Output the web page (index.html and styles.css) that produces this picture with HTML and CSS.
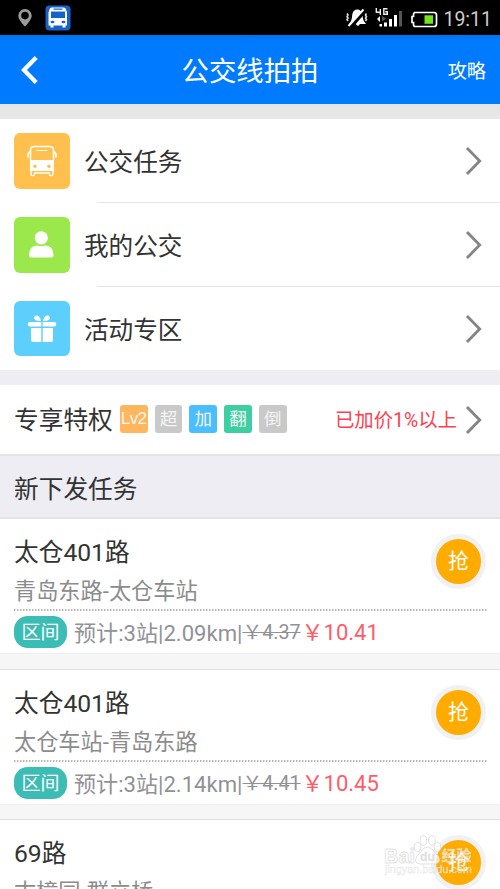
FILE: index.html
```html
<!DOCTYPE html>
<html lang="zh-CN">
<head>
<meta charset="utf-8">
<title>公交线拍拍</title>
<link rel="stylesheet" href="styles.css">
</head>
<body>
<div class="screen">
  <div class="status">
    <svg class="pin" width="14" height="18" viewBox="0 0 14 18"><path d="M7 0a6.700 6.700 0 0 0-6.700 6.700C.3 11 7 17.500 7 17.500s6.700-6.500 6.700-10.800A6.700 6.700 0 0 0 7 0zm0 2.800a3.800 3.800 0 1 1 0 7.600 3.800 3.800 0 0 1 0-7.600z" fill="#9b9b9b" fill-rule="evenodd"/></svg>
    <svg class="app" width="26" height="26" viewBox="0 0 26 26"><rect x=".5" y=".5" width="25" height="25" rx="4" fill="#1762c9"/><path d="M7 2.500h11q3 0 3.300 3l.7 2v13h-1.500v2h-3v-2h-9v2h-3v-2H3.500v-13l.7-2q.3-3 2.800-3z" fill="#fff"/><path d="M6 6.500h14v6.500H6zM8.500 3.600h9v1.200h-9z" fill="#1762c9"/><ellipse cx="7.500" cy="17" rx="2" ry="1.300" fill="#1762c9"/><ellipse cx="18.500" cy="17" rx="2" ry="1.300" fill="#1762c9"/></svg>
    <svg class="mute" width="22" height="20" viewBox="0 0 22 20"><path d="M3 16Q6 13 6.200 7q.8-5.500 5-5.500T16.500 7q.2 6 3.500 9h-6l-2 2-2.500-2z" fill="#fff"/><path d="M4 19.500 19 2.500" stroke="#000" stroke-width="4"/><path d="M2.500 18 17.500 1.500" stroke="#fff" stroke-width="2"/><path d="M1 5.500 2 7 1 8.500 2 10 1 11.500 2 13M20.500 5.500l-1 1.500 1 1.500-1 1.500 1 1.500-1 1.500" fill="none" stroke="#ddd" stroke-width="1.600"/></svg>
    <svg class="signal" width="28" height="20" viewBox="0 0 28 20"><path d="M1.300 0v4.200H6M5.300 1v6M12.500.8H8.800v5.400h3.500V3.700h-2" fill="none" stroke="#eee" stroke-width="1.400"/><path d="m2 11 3-3v6zM4.500 16h2.500v2.500H4.500zM9 14.500h3v4H9zM14 11h3v7.500h-3zM19 7h3v11.500h-3z" fill="#fff"/><path d="M24 3h3v15.500h-3zM7 8l4 2.500-4 3z" fill="#555"/></svg>
    <svg class="battery" width="28" height="17" viewBox="0 0 28 17"><path d="M5 1.500h19q2.500 0 2.500 2.500v9q0 2.500-2.500 2.500H5Q3.500 15.500 3.500 13v-1.500H2V5.500h1.500V4q0-2.500 1.500-2.500z" fill="none" stroke="#fff" stroke-width="1.700"/><path d="M14.500 4.300H23v8.500h-8.500z" fill="#72e51c"/></svg>
    <span class="clock">19:11</span>
  </div>
  <header class="header">
    <svg class="back" width="17" height="28" viewBox="0 0 17 28"><path d="M15.200 1.500 3 14l12.200 12.500" fill="none" stroke="#fff" stroke-width="4.300"/></svg>
    <h1 class="title">公交线拍拍</h1>
    <span class="guide">攻略</span>
  </header>
  <nav class="menu">
    <div class="item">
      <span class="tile orange"><svg width="56" height="56" viewBox="0 0 56 56"><path d="M16.500 27V17q0-3.500 4-3.500h15q4 0 4 3.500v10" fill="none" stroke="#fff" stroke-width="1.500"/><path d="M22.500 17.500h11" stroke="#fff" stroke-width="1.200"/><path d="M16.500 18.500q-3 1-2.500 6M39.500 18.500q3 1 2.500 6" fill="none" stroke="#fff" stroke-width="1.800"/><path d="M16 27h24v11H16z" fill="#fff"/><circle cx="21" cy="33.300" r="1.700" fill="#ffc04e"/><circle cx="35" cy="33.300" r="1.700" fill="#ffc04e"/><path d="M17 38v3.500q0 1.200 1.700 1.200t1.800-1.200V40h15v1.500q0 1.200 1.700 1.200t1.800-1.200V38" fill="none" stroke="#fff" stroke-width="1.300"/></svg></span>
      <div class="body"><span class="name">公交任务</span><svg class="arrow" width="18" height="30" viewBox="0 0 18 30"><path d="m2 2 12.700 13L2 28" fill="none" stroke="#858585" stroke-width="2.800"/></svg></div>
    </div>
    <div class="item">
      <span class="tile green"><svg width="56" height="56" viewBox="0 0 56 56"><circle cx="27.300" cy="20.800" r="6.600" fill="#fff"/><path d="M15 38.500q0-9.500 8-10 4 1.500 8.500 0 8 .5 8 10 0 2-2 2H17q-2 0-2-2z" fill="#fff"/></svg></span>
      <div class="body"><span class="name">我的公交</span><svg class="arrow" width="18" height="30" viewBox="0 0 18 30"><path d="m2 2 12.700 13L2 28" fill="none" stroke="#858585" stroke-width="2.800"/></svg></div>
    </div>
    <div class="item">
      <span class="tile blue"><svg width="56" height="56" viewBox="0 0 56 56"><path d="M16 21h11.300v4.500H16a2 2 0 0 1 0-4.500zM28.700 21H40a2 2 0 0 1 0 4.500H28.700zM17 27h10.300v14H19q-2 0-2-2zM28.700 27H39v12q0 2-2 2h-8.300z" fill="#fff"/><path d="M27 20q-6 0-7-2.500 0-3 3-3Q26 15 27 20zM29 20q6 0 7-2.500 0-3-3-3Q30 15 29 20z" fill="#fff"/></svg></span>
      <div class="body"><span class="name">活动专区</span><svg class="arrow" width="18" height="30" viewBox="0 0 18 30"><path d="m2 2 12.700 13L2 28" fill="none" stroke="#858585" stroke-width="2.800"/></svg></div>
    </div>
  </nav>
  <section class="privilege">
    <span class="label">专享特权</span>
    <div class="tags"><span class="tag lv">Lv2</span><span class="tag">超</span><span class="tag sky">加</span><span class="tag mint">翻</span><span class="tag">倒</span></div>
    <span class="raise">已加价1%以上</span>
    <svg class="arrow" width="18" height="30" viewBox="0 0 18 30"><path d="m2 2 12.700 13L2 28" fill="none" stroke="#858585" stroke-width="2.800"/></svg>
  </section>
  <h2 class="section">新下发任务</h2>
  <article class="card">
    <div class="top"><div><div class="route">太仓401路</div><div class="stops">青岛东路-太仓车站</div></div><span class="grab">抢</span></div>
    <svg class="dots" width="473" height="2"><path d="M0 1h473" stroke="#999" stroke-width="1.400" stroke-dasharray="1.400 1.600"/></svg>
    <div class="meta"><span class="badge">区间</span><span class="info">预计:3站|2.09km|</span><s class="old">￥4.37</s><span class="price">￥10.41</span></div>
  </article>
  <article class="card">
    <div class="top"><div><div class="route">太仓401路</div><div class="stops">太仓车站-青岛东路</div></div><span class="grab">抢</span></div>
    <svg class="dots" width="473" height="2"><path d="M0 1h473" stroke="#999" stroke-width="1.400" stroke-dasharray="1.400 1.600"/></svg>
    <div class="meta"><span class="badge">区间</span><span class="info">预计:3站|2.14km|</span><s class="old">￥4.41</s><span class="price">￥10.45</span></div>
  </article>
  <article class="card">
    <div class="top"><div><div class="route">69路</div><div class="stops">古樟园-群立桥</div></div><span class="grab">抢</span></div>
  </article>
  <div class="watermark">
    <svg width="94" height="48" viewBox="0 0 94 48">
      <g fill="#fff" fill-opacity=".7" stroke="#d8d8d8" stroke-opacity=".8">
        <ellipse cx="34.500" cy="14" rx="3.300" ry="4.500"/><ellipse cx="40.500" cy="7.500" rx="3.300" ry="4.800"/><ellipse cx="49" cy="7.500" rx="3.300" ry="4.800"/><ellipse cx="54.500" cy="14" rx="3.300" ry="4.500"/>
        <path d="M44.500 14q4 0 7 5 5 4 5 8 0 4-6 4h-12q-6 0-6-4 0-4 5-8 3-5 7-5z"/>
      </g>
      <g class="mark-text"><text class="outline" x="1" y="30" font-size="21" textLength="31" lengthAdjust="spacingAndGlyphs">Bai</text><text class="du" x="37" y="28" font-size="13" textLength="15" lengthAdjust="spacingAndGlyphs">du</text><text x="58.500" y="28" font-size="15" font-weight="700">经验</text><text x="2" y="40" font-size="10" textLength="87" lengthAdjust="spacingAndGlyphs">jingyan.baidu.com</text></g>
    </svg>
  </div>
</div>
</body>
</html>
```
FILE: styles.css
```css
* { box-sizing: border-box; }
body { margin: 0; font-family: Roboto, "Noto Sans CJK SC", sans-serif; color: #333; background: #fff; }
svg { display: block; flex: none; }
h1, h2 { margin: 0; font-weight: 400; }
.screen { position: relative; width: 500px; height: 889px; overflow: hidden; white-space: nowrap; }

.status { display: flex; align-items: center; height: 35px; padding: 0 8px 0 18px; background: #000; }
.app { margin-left: 13px; }
.mute { margin-left: auto; }
.signal { margin-left: 7px; }
.battery { margin-left: 7px; margin-top: 3px; }
.clock { margin: 4px 0 0 5px; font-size: 19.5px; line-height: 24px; color: #ccc; }

.header { display: grid; grid-template-columns: 70px 1fr 70px; align-items: center; height: 69px; padding: 0 14px 0 21px; color: #fff; background: linear-gradient(#0073ee, #007bff 5px); }
.title { text-align: center; font-size: 27.4px; line-height: 40px; padding: 5px 7px 0 0; }
.guide { justify-self: end; font-size: 19.2px; line-height: 28px; padding-top: 4px; }

.menu { padding-top: 15px; background: #e7e7e7; }
.item { display: flex; align-items: center; height: 84px; padding-left: 14px; background: linear-gradient(#e5e5e5, #e5e5e5) 97px 100% / 403px 1px no-repeat #fff; }
.item:last-child { background: #fff; height: 83px; }
.tile { width: 55.5px; height: 55.5px; border-radius: 6px; overflow: hidden; }
.orange { background: #ffc04e; }
.green { background: #9be84c; }
.blue { background: #5dcffc; }
.body { display: flex; flex: 1; align-items: center; justify-content: space-between; padding: 0 17px 0 14.5px; font-size: 24.6px; line-height: 36px; }
.name { padding-top: 4px; }

.privilege { display: flex; align-items: center; height: 86px; padding: 0 17px 0 14px; border-top: 15px solid #eeedf3; border-bottom: 2px solid #e3e3e3; }
.label { font-size: 24.7px; line-height: 36px; padding-top: 3px; }
.tags { display: flex; gap: 7px; margin: -2px 0 0 7px; }
.tag { display: flex; align-items: center; justify-content: center; width: 27.8px; height: 28px; border-radius: 3px; background: #c9c9c9; color: #f5f5f5; font-size: 17.5px; line-height: 28px; }
.lv { background: #ffb65d; font-family: "Liberation Sans", sans-serif; font-size: 17px; letter-spacing: -.6px; }
.sky { background: #4abeff; }
.mint { background: #3dcea2; }
.raise { margin-left: auto; margin-right: 8px; color: #ff4051; font-size: 19.4px; line-height: 28px; padding-top: 3px; }

.section { height: 63px; padding: 16px 14px 0; font-size: 24.7px; line-height: 36px; background: #eeedf3; border-bottom: 2px solid #e3e3e3; }

.card { height: 150.5px; padding: 0 13px 0 14px; border-bottom: 1px solid #e0e0e0; background: linear-gradient(#eee, #eee) 0 134px / 100% 1px no-repeat, linear-gradient(#f6f6f6, #f6f6f6) 0 135px / 100% 16px no-repeat #fff; }
.top { display: flex; justify-content: space-between; height: 90px; padding-top: 15px; }
.route { font-size: 24.7px; line-height: 37px; }
.stops { color: #8c8c8c; font-size: 22.2px; line-height: 34px; padding-top: 3px; }
.grab { width: 55px; height: 55px; margin-right: 1px; border: 5.5px solid #f1f1f1; border-radius: 50%; background: #ffab00; color: #fff; text-align: center; font-size: 21px; line-height: 45px; }
.meta { display: flex; align-items: center; height: 32px; margin-top: 5px; color: #919196; font-size: 22px; line-height: 32px; }
.badge { width: 53px; height: 32px; border-radius: 14px; background: #3bbcb4; color: #fff; text-align: center; font-size: 19px; line-height: 33px; }
.info { margin-left: 7px; padding-top: 2px; font-size: 22.1px; }
.old { font-size: 19.7px; padding-top: 2px; }
.price { color: #ff5c6a; margin-left: 1px; padding-top: 2px; }

.watermark { position: absolute; left: 383px; top: 833px; }
.mark-text { fill: #fff; fill-opacity: .65; stroke: #d8d8d8; stroke-width: .4; stroke-opacity: .7; font-family: "Liberation Sans", "Noto Sans CJK SC", sans-serif; }
.outline { font-weight: 700; stroke-width: 1; }
.du { fill: #d5d5d5; font-weight: 700; }
```
